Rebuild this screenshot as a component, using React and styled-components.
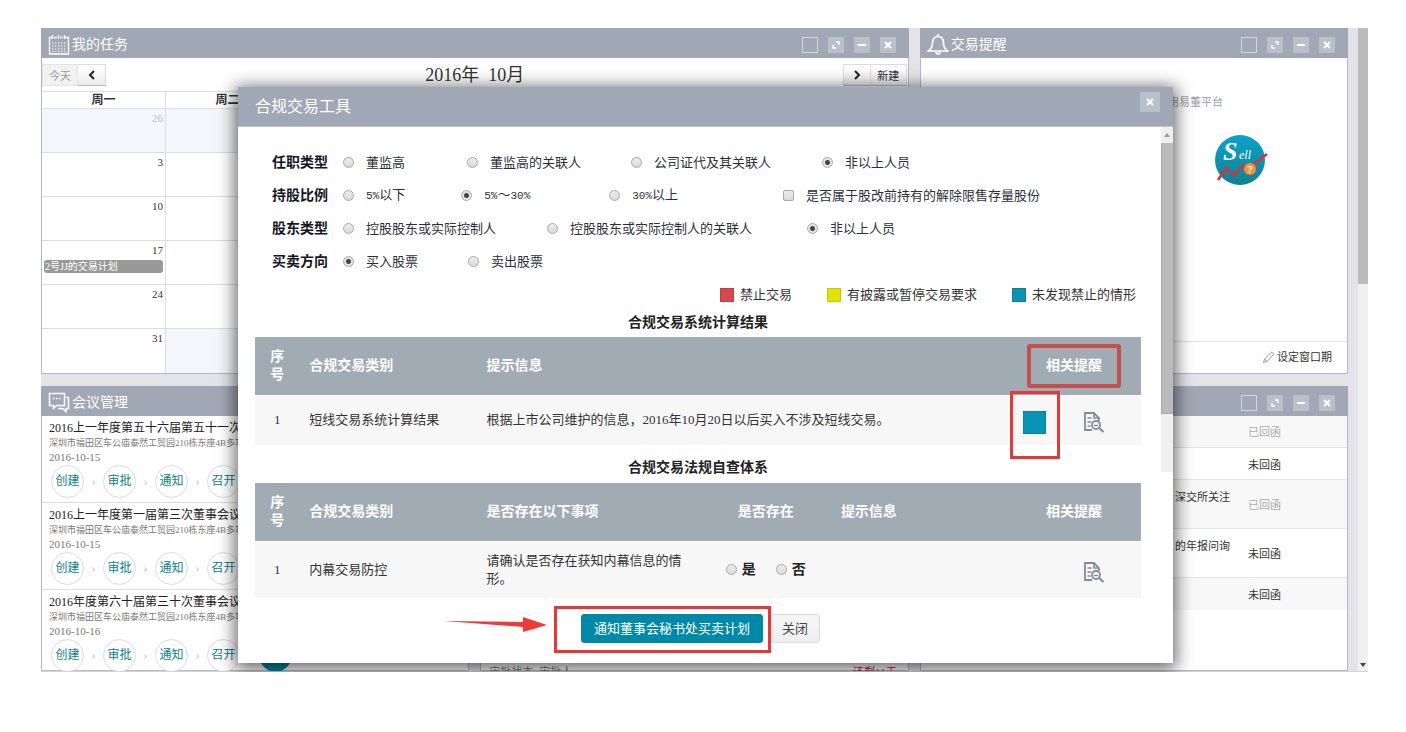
import React from "react";
import styled, { createGlobalStyle, css } from "styled-components";

const GlobalStyle = createGlobalStyle`
  * {
    box-sizing: border-box;
  }
  body {
    margin: 0;
    background: #fff;
    color: #333;
    font-family: "Liberation Serif", "Noto Sans CJK SC", sans-serif;
    font-size: 13px;
    line-height: 18px;
  }
  button, input {
    font-family: inherit;
    margin: 0;
  }
  table {
    border-collapse: collapse;
    border-spacing: 0;
  }
  h1, h2, h3, p, ul {
    margin: 0;
    padding: 0;
    font-weight: normal;
  }
`;

/* ---------- page ---------- */

const Stage = styled.div`
  position: relative;
  padding: 28px 38px 0 41px;
`;

const Frame = styled.div`
  display: flex;
  height: calc(100vh - 88px);
  overflow: hidden;
  background: #e3e3e9;
  border-bottom: 1px solid #d4d4d6;
`;

const Dashboard = styled.main`
  flex: 1;
  display: grid;
  grid-template-columns: repeat(3, minmax(0, 1fr));
  grid-template-rows: auto minmax(0, 1fr);
  gap: 12px 11px;
  margin-right: 10px;
`;

const PageTrack = styled.div`
  width: 10px;
  display: flex;
  flex-direction: column;
  justify-content: space-between;
  align-items: center;
  background: #f0f0f0;
  padding-bottom: 4px;
`;

const PageThumb = styled.div`
  width: 10px;
  height: 40%;
  background: #bbb;
`;

const Arrow = styled.span`
  width: 0;
  height: 0;
  border: 3px solid transparent;
  ${(p) =>
    p.$up
      ? css`
          border-top: 0;
          border-bottom: 4px solid #999;
        `
      : css`
          border-bottom: 0;
          border-top: 4px solid #444;
        `}
`;

/* ---------- panels ---------- */

const Panel = styled.section`
  display: flex;
  flex-direction: column;
  min-width: 0;
  background: #fff;
  border: 1px solid #b4b8c2;
  border-top: 0;
  ${(p) => p.$wide && "grid-column: span 2;"}
`;

const PanelHead = styled.header`
  display: flex;
  align-items: center;
  flex: none;
  height: 30px;
  padding: 4px 13px 0 7px;
  margin: 0 -1px;
  background: #a1a8b5;
  color: #fff;
`;

const PanelTitle = styled.h2`
  font-size: 14px;
  line-height: 20px;
  margin-left: 2px;
`;

const PanelTools = styled.div`
  display: flex;
  gap: 10px;
  margin-left: auto;
`;

const ToolButton = styled.button`
  display: flex;
  align-items: center;
  justify-content: center;
  width: ${(p) => p.$size || 16}px;
  height: ${(p) => p.$size || 16}px;
  padding: 0;
  border: 0;
  color: #fff;
  background: #b9c0ca;
  ${(p) =>
    p.$outline &&
    css`
      background: none;
      border: 1px solid #d3d7de;
    `}
`;

const CrossIcon = () => (
  <svg width="8" height="8" viewBox="0 0 8 8" stroke="currentColor" strokeWidth="2">
    <path d="M1 1l6 6M7 1l-6 6" />
  </svg>
);

const Tools = () => (
  <PanelTools>
    <ToolButton $outline aria-label="换肤" />
    <ToolButton aria-label="展开">
      <svg width="8" height="8" viewBox="0 0 8 8" fill="none" stroke="currentColor" strokeWidth="1.4">
        <path d="M4 1h3v3M1 4v3h3" />
      </svg>
    </ToolButton>
    <ToolButton aria-label="最小化">
      <svg width="8" height="8" viewBox="0 0 8 8" stroke="currentColor" strokeWidth="2">
        <path d="M0 4h8" />
      </svg>
    </ToolButton>
    <ToolButton aria-label="关闭">
      <CrossIcon />
    </ToolButton>
  </PanelTools>
);

/* ---------- calendar ---------- */

const CalBar = styled.div`
  display: grid;
  grid-template-columns: 1fr auto 1fr;
  align-items: center;
  height: 33px;
`;

const CalTitle = styled.h3`
  font-size: 18px;
  line-height: 24px;
  white-space: pre;
`;

const ButtonGroup = styled.div`
  display: flex;
  padding: 0 1px 0 0;
  justify-self: ${(p) => (p.$right ? "end" : "start")};
`;

const CalButton = styled.button`
  display: flex;
  align-items: center;
  justify-content: center;
  height: 22px;
  min-width: ${(p) => (p.$wide ? 36 : 28)}px;
  padding: 0;
  font-size: 11px;
  color: #333;
  border: 1px solid #ddd;
  border-bottom-color: #bbb;
  background: linear-gradient(#fff, #ececec);
  & + & {
    border-left-width: 0;
  }
  &:disabled {
    color: #999;
    background: #f1f1f1;
    border-color: #e4e4e4;
  }
`;

const Calendar = styled.table`
  width: 100%;
  table-layout: fixed;
  th {
    height: 17px;
    padding: 0;
    font-size: 12px;
    line-height: 16px;
    border: 1px solid #ddd;
    border-left: 0;
  }
`;

const Day = styled.td`
  height: 44px;
  padding: 0 2px;
  vertical-align: top;
  text-align: right;
  font-size: 11px;
  line-height: 18px;
  border: 1px solid #ddd;
  border-left: 0;
  border-bottom: 0;
  color: ${(p) => (p.$out ? "#bbb" : "#333")};
  background: ${(p) => (p.$out ? "#f3f7fb" : "#fff")};
`;

const EventBar = styled.div`
  height: 13px;
  margin-top: 1px;
  padding-left: 1px;
  border-radius: 3px;
  background: #999;
  color: #fff;
  font-size: 10px;
  line-height: 13px;
  text-align: left;
`;

const weekdays = ["周一", "周二", "周三", "周四", "周五", "周六", "周日"];
const weeks = [26, 3, 10, 17, 24, 31];

const dayNumber = (week, day) => {
  if (week === 0) return day < 5 ? 26 + day : day - 4;
  const n = weeks[week] + day;
  return n > 31 ? n - 31 : n;
};

const isOutside = (week, day) => (week === 0 ? day < 5 : weeks[week] + day > 31);

const Tasks = () => (
  <Panel $wide>
    <PanelHead>
      <svg width="22" height="22" viewBox="0 0 22 22" fill="none" stroke="#fff">
        <path d="M1.5 3v17h19V3M1 3.5h3M6 3.5h3M12 3.5h3M17 3.5h4M4.500 1v4M10.500 1v4M16.500 1v4" strokeWidth="1.3" />
        <path d="M4 9h14M4 12h14M4 15h14M4 17.500h14" strokeDasharray="1.500 1.500" />
      </svg>
      <PanelTitle>我的任务</PanelTitle>
      <Tools />
    </PanelHead>
    <CalBar>
      <ButtonGroup>
        <CalButton $wide disabled>
          今天
        </CalButton>
        <CalButton aria-label="上个月">
          <svg width="8" height="10" viewBox="0 0 8 10" fill="none" stroke="#222" strokeWidth="2">
            <path d="M6 1L2 5l4 4" />
          </svg>
        </CalButton>
      </ButtonGroup>
      <CalTitle>{"2016年  10月"}</CalTitle>
      <ButtonGroup $right>
        <CalButton aria-label="下个月">
          <svg width="8" height="10" viewBox="0 0 8 10" fill="none" stroke="#222" strokeWidth="2">
            <path d="M2 1l4 4-4 4" />
          </svg>
        </CalButton>
        <CalButton $wide>新建</CalButton>
      </ButtonGroup>
    </CalBar>
    <Calendar>
      <thead>
        <tr>
          {weekdays.map((d) => (
            <th key={d}>{d}</th>
          ))}
        </tr>
      </thead>
      <tbody>
        {weeks.map((start, w) => (
          <tr key={start}>
            {weekdays.map((d, i) => (
              <Day key={d} $out={isOutside(w, i)}>
                {dayNumber(w, i)}
                {start === 17 && i === 0 && <EventBar>2号JJ的交易计划</EventBar>}
              </Day>
            ))}
          </tr>
        ))}
      </tbody>
    </Calendar>
  </Panel>
);

/* ---------- trade reminder ---------- */

const RemindBody = styled.div`
  flex: 1;
  display: flex;
  flex-direction: column;
  align-items: flex-end;
`;

const RemindText = styled.p`
  padding: 35px 124px 23px 0;
  font-size: 11px;
  line-height: 18px;
  color: #97a1a8;
`;

const SellButton = styled.button`
  display: flex;
  margin-right: 79px;
  padding: 0;
  border: 0;
  background: none;
`;

const RemindFoot = styled.div`
  display: flex;
  align-items: center;
  justify-content: flex-end;
  gap: 2px;
  height: 32px;
  padding-right: 15px;
  border-top: 1px solid #e2e2e2;
`;

const FootLink = styled.a`
  color: #333;
  font-size: 11px;
  line-height: 18px;
  text-decoration: none;
`;

const Reminder = () => (
  <Panel>
    <PanelHead>
      <svg width="22" height="22" viewBox="0 0 22 22" fill="none" stroke="#fff" strokeWidth="1.700">
        <path d="M11 2.500c-4 0-5.500 3-5.500 6.500 0 4.500-1.500 6-4 8h19c-2.500-2-4-3.500-4-8 0-3.500-1.500-6.500-5.500-6.500z" />
        <path d="M11 0v2M8.800 18c.5 2.500 3.900 2.500 4.400 0" />
      </svg>
      <PanelTitle>交易提醒</PanelTitle>
      <Tools />
    </PanelHead>
    <RemindBody>
      <RemindText>使用易董平台</RemindText>
      <SellButton aria-label="卖出">
        <svg width="54" height="52" viewBox="9 9 54 52">
          <defs>
            <linearGradient id="sell" x1="0" y1="0" x2="0" y2="1">
              <stop offset="0" stopColor="#0aa3cc" />
              <stop offset="1" stopColor="#12808f" />
            </linearGradient>
          </defs>
          <circle cx="35" cy="35" r="25" fill="url(#sell)" />
          <text x="18" y="35" fontSize="26" fontStyle="italic" fontWeight="bold" fill="#fff">
            S
          </text>
          <text x="34" y="34" fontSize="12" fontStyle="italic" fill="#fff">
            ell
          </text>
          <path d="M13 55l8-12 8 7 9-10 5 6 6-7 13-10" fill="none" stroke="#d5333d" strokeWidth="2.600" />
          <circle cx="45" cy="44" r="6" fill="#f2913a" />
          <text x="45" y="48" fontSize="11" fontWeight="bold" textAnchor="middle" fill="#fff">
            ?
          </text>
        </svg>
      </SellButton>
    </RemindBody>
    <RemindFoot>
      <svg width="13" height="13" viewBox="0 0 13 13" fill="none" stroke="#999" strokeWidth="1">
        <path d="M1.500 11.500l1-3.500 6.500-6.500c1-1 3 1 2.200 2.200L5 10.500zM2.500 8l2.500 2.500" />
      </svg>
      <FootLink href="#window">设定窗口期</FootLink>
    </RemindFoot>
  </Panel>
);

/* ---------- meetings ---------- */

const Meeting = styled.article`
  padding: 5px 7px 4px;
  border-bottom: 1px solid #ddd;
  white-space: nowrap;
  overflow: hidden;
  flex: none;
`;

const MeetingTitle = styled.h3`
  font-size: 12px;
  line-height: 15px;
  color: #222;
`;

const MeetingInfo = styled.p`
  font-size: ${(p) => (p.$date ? 11 : 9)}px;
  line-height: 14px;
  color: #777;
`;

const Steps = styled.div`
  display: flex;
  align-items: center;
  padding: 1px 0 0 2px;
`;

const Step = styled.button`
  flex: none;
  width: 33px;
  height: 33px;
  padding: 0;
  border: 1px solid ${(p) => (p.$active ? "#0089a7" : "#d9dcdf")};
  border-radius: 50%;
  background: ${(p) => (p.$active ? "#0089a7" : "#fff")};
  color: ${(p) => (p.$active ? "#fff" : "#0b7f8c")};
  font-size: 12px;
  line-height: 16px;
`;

const StepArrow = styled.span`
  flex: none;
  width: 19px;
  text-align: center;
  color: #bbb;
  font-size: 12px;
  line-height: 16px;
`;

const meetings = [
  { title: "2016上一年度第五十六届第五十一次董事会", date: "2016-10-15" },
  { title: "2016上一年度第一届第三次董事会议", date: "2016-10-15" },
  { title: "2016年度第六十届第三十次董事会议", date: "2016-10-16" },
];

const Meetings = () => (
  <Panel>
    <PanelHead>
      <svg width="22" height="22" viewBox="0 0 22 22" fill="none" stroke="#fff" strokeWidth="1.500">
        <path d="M1.500 1.500h15v12h-8l-3 3v-3h-4z" />
        <path d="M18 5.500h2.500v11H18v3l-3.500-3H10" />
        <path d="M5 6.500h8" strokeDasharray="1.500 1.500" />
      </svg>
      <PanelTitle>会议管理</PanelTitle>
      <Tools />
    </PanelHead>
    {meetings.map((m) => (
      <Meeting key={m.title}>
        <MeetingTitle>{m.title}</MeetingTitle>
        <MeetingInfo>深圳市福田区车公庙泰然工贸园210栋东座4B多功能厅</MeetingInfo>
        <MeetingInfo $date>{m.date}</MeetingInfo>
        <Steps>
          {["创建", "审批", "通知", "召开"].map((s) => (
            <React.Fragment key={s}>
              <Step>{s}</Step>
              <StepArrow>›</StepArrow>
            </React.Fragment>
          ))}
          <Step $active aria-label="归档" />
        </Steps>
      </Meeting>
    ))}
  </Panel>
);

/* ---------- approvals ---------- */

const ApprovalRow = styled.div`
  display: flex;
  justify-content: space-between;
  margin-top: auto;
  margin-bottom: -11px;
  padding: 0 11px 0 8px;
  font-size: 11px;
  line-height: 18px;
  color: #777;
`;

const Left = styled.span`
  color: #c8202c;
`;

const Approvals = () => (
  <Panel>
    <PanelHead>
      <Tools />
    </PanelHead>
    <ApprovalRow>
      <span>审批状态: 审批人</span>
      <Left>还剩11天</Left>
    </ApprovalRow>
  </Panel>
);

/* ---------- letters ---------- */

const Letters = styled.table`
  width: 100%;
  font-size: 11px;
  line-height: 16px;
`;

const LetterRow = styled.tr`
  height: ${(p) => (p.$tall ? 49 : 32)}px;
  background: ${(p) => (p.$shade ? "#f8f8f8" : "#fff")};
  border-bottom: 1px solid #e4e4e4;
  &:last-child {
    border-bottom: 0;
  }
`;

const LetterName = styled.td`
  padding: 9px 18px 7px 0;
  vertical-align: top;
  text-align: right;
`;

const LetterState = styled.td`
  width: 99px;
  padding: 2px 0 0;
  color: ${(p) => (p.$done ? "#aaa" : "#333")};
`;

const letters = [
  { name: "", state: "已回函" },
  { name: "", state: "未回函" },
  { name: "深交所关注", state: "已回函", tall: true },
  { name: "的年报问询", state: "未回函", tall: true },
  { name: "", state: "未回函" },
];

const LetterPanel = () => (
  <Panel>
    <PanelHead>
      <Tools />
    </PanelHead>
    <Letters>
      <tbody>
        {letters.map((l, i) => (
          <LetterRow key={i} $tall={l.tall} $shade={i % 2 === 0}>
            <LetterName>{l.name}</LetterName>
            <LetterState $done={l.state === "已回函"}>{l.state}</LetterState>
          </LetterRow>
        ))}
      </tbody>
    </Letters>
  </Panel>
);

/* ---------- dialog ---------- */

const Overlay = styled.div`
  position: absolute;
  inset: 28px 38px 0 41px;
  display: flex;
  padding: 59px 195px 9px 197px;
`;

const Dialog = styled.div`
  flex: 1;
  display: flex;
  flex-direction: column;
  min-width: 0;
  background: #fff;
  box-shadow: 0 3px 16px 3px rgba(0, 0, 0, 0.6);
`;

const DialogHead = styled.header`
  display: flex;
  align-items: center;
  justify-content: space-between;
  height: 40px;
  padding: 0 13px 0 17px;
  background: #a1a8b5;
  border-bottom: 1px solid #bcc3ce;
  color: #fff;
`;

const DialogTitle = styled.h1`
  font-size: 16px;
  line-height: 24px;
`;

const CloseSlot = styled.div`
  align-self: flex-start;
  padding-top: 5px;
`;

const DialogBody = styled.div`
  flex: 1;
  display: flex;
  align-items: flex-start;
  min-height: 0;
`;

const Content = styled.div`
  flex: 1;
  min-width: 0;
  padding: 19px 20px 0 17px;
`;

const Scroller = styled.div`
  width: 12px;
  height: 345px;
  display: flex;
  flex-direction: column;
  align-items: center;
  background: #f0f0f0;
`;

const ScrollUp = styled.div`
  display: flex;
  align-items: center;
  height: 16px;
`;

const ScrollThumb = styled.div`
  width: 12px;
  height: 271px;
  background: #bbb;
  border-left: 1px solid #a8a8a8;
  border-bottom: 1px solid #a8a8a8;
`;

const FormRow = styled.div`
  display: flex;
  align-items: center;
  height: 33px;
  padding-left: 17px;
`;

const RowLabel = styled.span`
  width: 71px;
  font-size: 14px;
  font-weight: bold;
  color: #14161f;
`;

const Option = styled.label`
  display: flex;
  align-items: center;
  gap: 12px;
  margin-left: ${(p) => p.$gap || 0}px;
  color: #2c2f3a;
  white-space: nowrap;
`;

const Small = styled.span`
  font-family: "Liberation Mono", monospace;
  font-size: 11px;
`;

const boxLook = css`
  appearance: none;
  flex: none;
  width: 11px;
  height: 11px;
  border: 1px solid #aaa;
  background: linear-gradient(#ececec, #dadada);
`;

const Radio = styled.input.attrs({ type: "radio" })`
  ${boxLook}
  border-radius: 50%;
  &:checked {
    background: radial-gradient(circle, #444 0 2px, #e4e4e4 3px);
  }
`;

const Check = styled.input.attrs({ type: "checkbox" })`
  ${boxLook}
  border-radius: 2px;
`;

const Legend = styled.div`
  display: flex;
  justify-content: flex-end;
  gap: 35px;
  padding: 8px 5px 10px 0;
`;

const LegendItem = styled.span`
  display: flex;
  align-items: center;
  gap: 6px;
`;

const Swatch = styled.span`
  flex: none;
  width: ${(p) => p.$size || 14}px;
  height: ${(p) => p.$size || 14}px;
  background: ${(p) => p.$color};
  border: 1px solid rgba(0, 0, 0, 0.12);
`;

const Caption = styled.h3`
  padding: ${(p) => (p.$next ? "14px 0 6px" : "0 0 5px")};
  font-size: 14px;
  font-weight: bold;
  line-height: 18px;
  text-align: center;
  color: #222;
`;

const Grid = styled.table`
  width: 100%;
  table-layout: fixed;
  th {
    height: 58px;
    padding: 0 10px;
    background: #a0abb3;
    color: #fff;
    font-size: 14px;
    line-height: 18px;
    text-align: left;
  }
  td {
    height: ${(p) => p.$rowHeight}px;
    padding: 0 10px;
    background: #f7f7f7;
    border-top: 1px solid #fff;
  }
  th:first-child,
  td:first-child {
    padding: 0 15px;
    text-align: center;
  }
`;

const HeadCell = styled.th`
  && {
    text-align: center;
    padding: 0;
  }
`;

const AnswerHead = styled.th`
  && {
    padding: 0 0 0 31px;
  }
`;

const IconCell = styled.td`
  && {
    padding: 4px 0 0 ${(p) => p.$pad}px;
  }
`;

const MarkedText = styled.span`
  display: inline-block;
  padding: 9px 15px;
  border: 4px solid #c4504e;
  border-radius: 3px;
`;

const Marked = styled.div`
  position: relative;
  display: flex;
  width: fit-content;
`;

const Marker = styled.span`
  position: absolute;
  inset: ${(p) => p.$inset};
  border: 3px solid #e2393b;
  pointer-events: none;
`;

const DetailButton = styled.button`
  display: flex;
  padding: 0;
  border: 0;
  background: none;
  color: #848b98;
`;

const Answers = styled.div`
  display: flex;
  gap: 20px;
  padding-left: 9px;
`;

const Answer = styled.label`
  display: flex;
  align-items: center;
  gap: 5px;
  font-size: 14px;
  font-weight: bold;
  color: #222;
`;

const DialogFoot = styled.footer`
  display: flex;
  justify-content: center;
  gap: 7px;
  padding: 0 10px 20px 0;
`;

const Pointer = styled.svg`
  position: absolute;
  right: calc(100% + 34px);
  top: 2px;
`;

const FootButton = styled.button`
  height: 29px;
  padding: 0 ${(p) => (p.$primary ? 12 : 11)}px;
  font-size: 13px;
  line-height: 18px;
  border: 1px solid ${(p) => (p.$primary ? "#0089a7" : "#dcdcdc")};
  border-radius: 3px;
  background: ${(p) => (p.$primary ? "#0089a7" : "linear-gradient(#f6f6f6, #eee)")};
  color: ${(p) => (p.$primary ? "#fff" : "#444")};
  white-space: nowrap;
`;

const Detail = () => (
  <DetailButton aria-label="查看提醒">
    <svg width="22" height="22" viewBox="0 0 22 22" fill="none" stroke="currentColor" strokeWidth="1.800">
      <path d="M9 19H2V2h9l5 5v3" />
      <path d="M11 2v5h5M4.500 7h4M4.500 11h4M4.500 15h3" strokeWidth="1.600" />
      <circle cx="13" cy="14" r="4" />
      <path d="M11 14.500h4" strokeWidth="1.500" />
      <path d="M16 17l4.500 4" strokeWidth="2.200" />
    </svg>
  </DetailButton>
);

const questions = [
  {
    label: "任职类型",
    name: "post",
    options: [
      { text: "董监高" },
      { text: "董监高的关联人", gap: 62 },
      { text: "公司证代及其关联人", gap: 50 },
      { text: "非以上人员", gap: 51, on: true },
    ],
  },
  {
    label: "持股比例",
    name: "ratio",
    options: [
      { num: "5%", text: "以下" },
      { num: "5%", text: "～", tail: "30%", gap: 56, on: true },
      { num: "30%", text: "以上", gap: 79 },
      { text: "是否属于股改前持有的解除限售存量股份", gap: 105, check: true },
    ],
  },
  {
    label: "股东类型",
    name: "holder",
    options: [
      { text: "控股股东或实际控制人" },
      { text: "控股股东或实际控制人的关联人", gap: 51 },
      { text: "非以上人员", gap: 55, on: true },
    ],
  },
  {
    label: "买卖方向",
    name: "side",
    options: [{ text: "买入股票", on: true }, { text: "卖出股票", gap: 50 }],
  },
];

const Question = ({ label, name, options }) => (
  <FormRow role="group" aria-labelledby={`q-${name}`}>
    <RowLabel id={`q-${name}`}>{label}</RowLabel>
    {options.map((o, i) => (
      <Option key={i} $gap={o.gap}>
        {o.check ? <Check /> : <Radio name={name} defaultChecked={o.on} />}
        <span>
          {o.num && <Small>{o.num}</Small>}
          {o.text}
          {o.tail && <Small>{o.tail}</Small>}
        </span>
      </Option>
    ))}
  </FormRow>
);

const Col = styled.col`
  width: ${(p) => p.$w};
`;

const ResultTable = () => (
  <Grid $rowHeight={50}>
    <colgroup>
      <Col $w="5%" />
      <Col $w="20%" />
      <Col $w="auto" />
      <Col $w="55px" />
      <Col $w="79px" />
    </colgroup>
    <thead>
      <tr>
        <th>序号</th>
        <th>合规交易类别</th>
        <th>提示信息</th>
        <HeadCell colSpan={2}>
          <MarkedText>相关提醒</MarkedText>
        </HeadCell>
      </tr>
    </thead>
    <tbody>
      <tr>
        <td>1</td>
        <td>短线交易系统计算结果</td>
        <td>根据上市公司维护的信息，2016年10月20日以后买入不涉及短线交易。</td>
        <IconCell $pad={16}>
          <Marked>
            <Swatch $color="#0a94b4" $size={23} />
            <Marker $inset="-20px -14px -25px -13px" />
          </Marked>
        </IconCell>
        <IconCell $pad={21}>
          <Detail />
        </IconCell>
      </tr>
    </tbody>
  </Grid>
);

const CheckTable = () => (
  <Grid $rowHeight={57}>
    <colgroup>
      <Col $w="5%" />
      <Col $w="20%" />
      <Col $w="26%" />
      <Col $w="14%" />
      <Col $w="auto" />
      <Col $w="134px" />
    </colgroup>
    <thead>
      <tr>
        <th>序号</th>
        <th>合规交易类别</th>
        <th>是否存在以下事项</th>
        <AnswerHead>是否存在</AnswerHead>
        <th>提示信息</th>
        <HeadCell>相关提醒</HeadCell>
      </tr>
    </thead>
    <tbody>
      <tr>
        <td>1</td>
        <td>内幕交易防控</td>
        <td>请确认是否存在获知内幕信息的情形。</td>
        <td>
          <Answers>
            <Answer>
              <Radio name="inside" />是
            </Answer>
            <Answer>
              <Radio name="inside" />否
            </Answer>
          </Answers>
        </td>
        <td />
        <IconCell $pad={76}>
          <Detail />
        </IconCell>
      </tr>
    </tbody>
  </Grid>
);

const TradeDialog = () => (
  <Overlay>
    <Dialog role="dialog" aria-labelledby="dialog-title">
      <DialogHead>
        <DialogTitle id="dialog-title">合规交易工具</DialogTitle>
        <CloseSlot>
          <ToolButton $size={20} aria-label="关闭窗口">
            <CrossIcon />
          </ToolButton>
        </CloseSlot>
      </DialogHead>
      <DialogBody>
        <Content>
          {questions.map((q) => (
            <Question key={q.name} {...q} />
          ))}
          <Legend>
            <LegendItem>
              <Swatch $color="#d44a4c" />
              禁止交易
            </LegendItem>
            <LegendItem>
              <Swatch $color="#e3e300" />
              有披露或暂停交易要求
            </LegendItem>
            <LegendItem>
              <Swatch $color="#0a94b4" />
              未发现禁止的情形
            </LegendItem>
          </Legend>
          <Caption>合规交易系统计算结果</Caption>
          <ResultTable />
          <Caption $next>合规交易法规自查体系</Caption>
          <CheckTable />
        </Content>
        <Scroller>
          <ScrollUp>
            <Arrow $up />
          </ScrollUp>
          <ScrollThumb />
        </Scroller>
      </DialogBody>
      <DialogFoot>
        <Marked>
          <FootButton $primary>通知董事会秘书处买卖计划</FootButton>
          <Marker $inset="-8px -8px -10px -27px" />
          <Pointer width="103" height="16" viewBox="0 0 103 16" fill="#ee3a3a">
            <path d="M0 5L79 6V1l24 8-24 7v-5z" />
          </Pointer>
        </Marked>
        <FootButton>关闭</FootButton>
      </DialogFoot>
    </Dialog>
  </Overlay>
);

const App = () => {
  return (
    <>
      <GlobalStyle />
      <Stage>
        <Frame>
          <Dashboard>
            <Tasks />
            <Reminder />
            <Meetings />
            <Approvals />
            <LetterPanel />
          </Dashboard>
          <PageTrack>
            <PageThumb />
            <Arrow />
          </PageTrack>
        </Frame>
        <TradeDialog />
      </Stage>
    </>
  );
};

export default App;
